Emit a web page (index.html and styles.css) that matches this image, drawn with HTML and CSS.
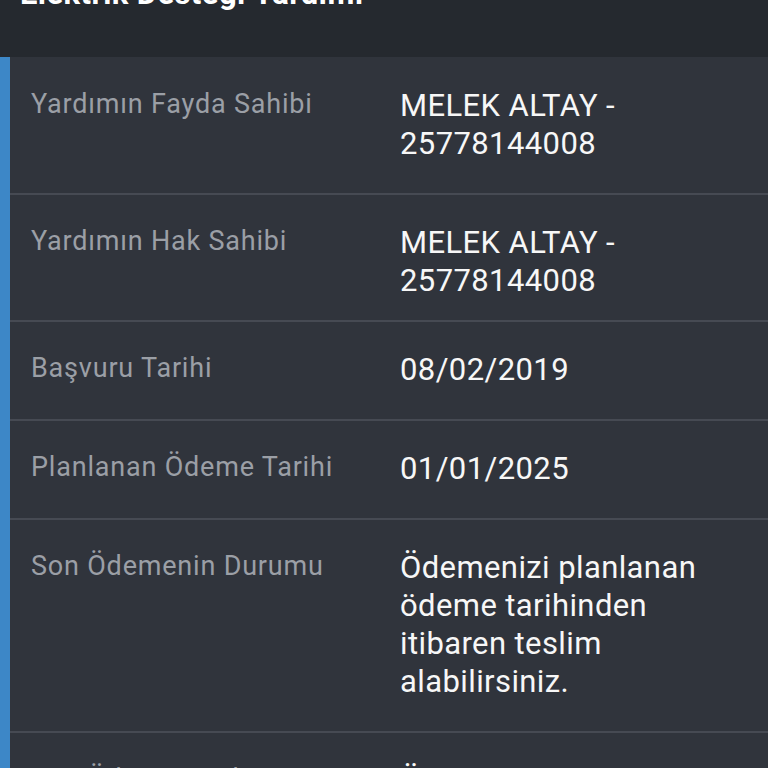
FILE: index.html
```html
<!DOCTYPE html>
<html lang="tr">
<head>
<meta charset="utf-8">
<title>Elektrik Desteği Yardımı</title>
<link rel="stylesheet" href="styles.css">
</head>
<body>
<header class="header">
  <h1 class="title">Elektrik Desteği Yardımı</h1>
</header>
<section class="card">
  <div class="row row--first">
    <div class="label">Yardımın Fayda Sahibi</div>
    <div class="value">MELEK ALTAY - 25778144008</div>
  </div>
  <div class="row row--short">
    <div class="label">Yardımın Hak Sahibi</div>
    <div class="value">MELEK ALTAY - 25778144008</div>
  </div>
  <div class="row">
    <div class="label">Başvuru Tarihi</div>
    <div class="value">08/02/2019</div>
  </div>
  <div class="row">
    <div class="label">Planlanan Ödeme Tarihi</div>
    <div class="value">01/01/2025</div>
  </div>
  <div class="row">
    <div class="label">Son Ödemenin Durumu</div>
    <div class="value">Ödemenizi planlanan ödeme tarihinden itibaren teslim alabilirsiniz.</div>
  </div>
  <div class="row">
    <div class="label">Son Ödeme Tarihi</div>
    <div class="value">Ödeme bilgisi bulunamadı</div>
  </div>
</section>
</body>
</html>
```
FILE: styles.css
```css
* { box-sizing: border-box; }
html, body {
  margin: 0;
  padding: 0;
  background: #30343c;
  font-family: Roboto, "Noto Sans", "Liberation Sans", sans-serif;
  overflow: hidden;
}
.header {
  height: 57px;
  background: #25292f;
  padding: 0 20px;
  overflow: hidden;
}
.title {
  margin: -24px 0 0;
  font-size: 31px;
  line-height: 36px;
  font-weight: 700;
  letter-spacing: 0.4px;
  color: #ffffff;
}
.card {
  background: #30343c;
  border-left: 10px solid #3d87c7;
  display: flex;
  flex-direction: column;
}
.row {
  display: grid;
  grid-template-columns: 369px 1fr;
  padding: 29px 20px 30px 21px;
  border-top: 2px solid #464a53;
}
.row--first {
  border-top: none;
  padding-top: 30px;
  padding-bottom: 30px;
}
.row--short {
  padding-bottom: 20px;
}
.label {
  font-size: 27px;
  line-height: 34px;
  letter-spacing: 0.8px;
  color: #9b9fa6;
}
.value {
  font-size: 31px;
  line-height: 38px;
  letter-spacing: 0.4px;
  color: #f7f7f7;
}
```
